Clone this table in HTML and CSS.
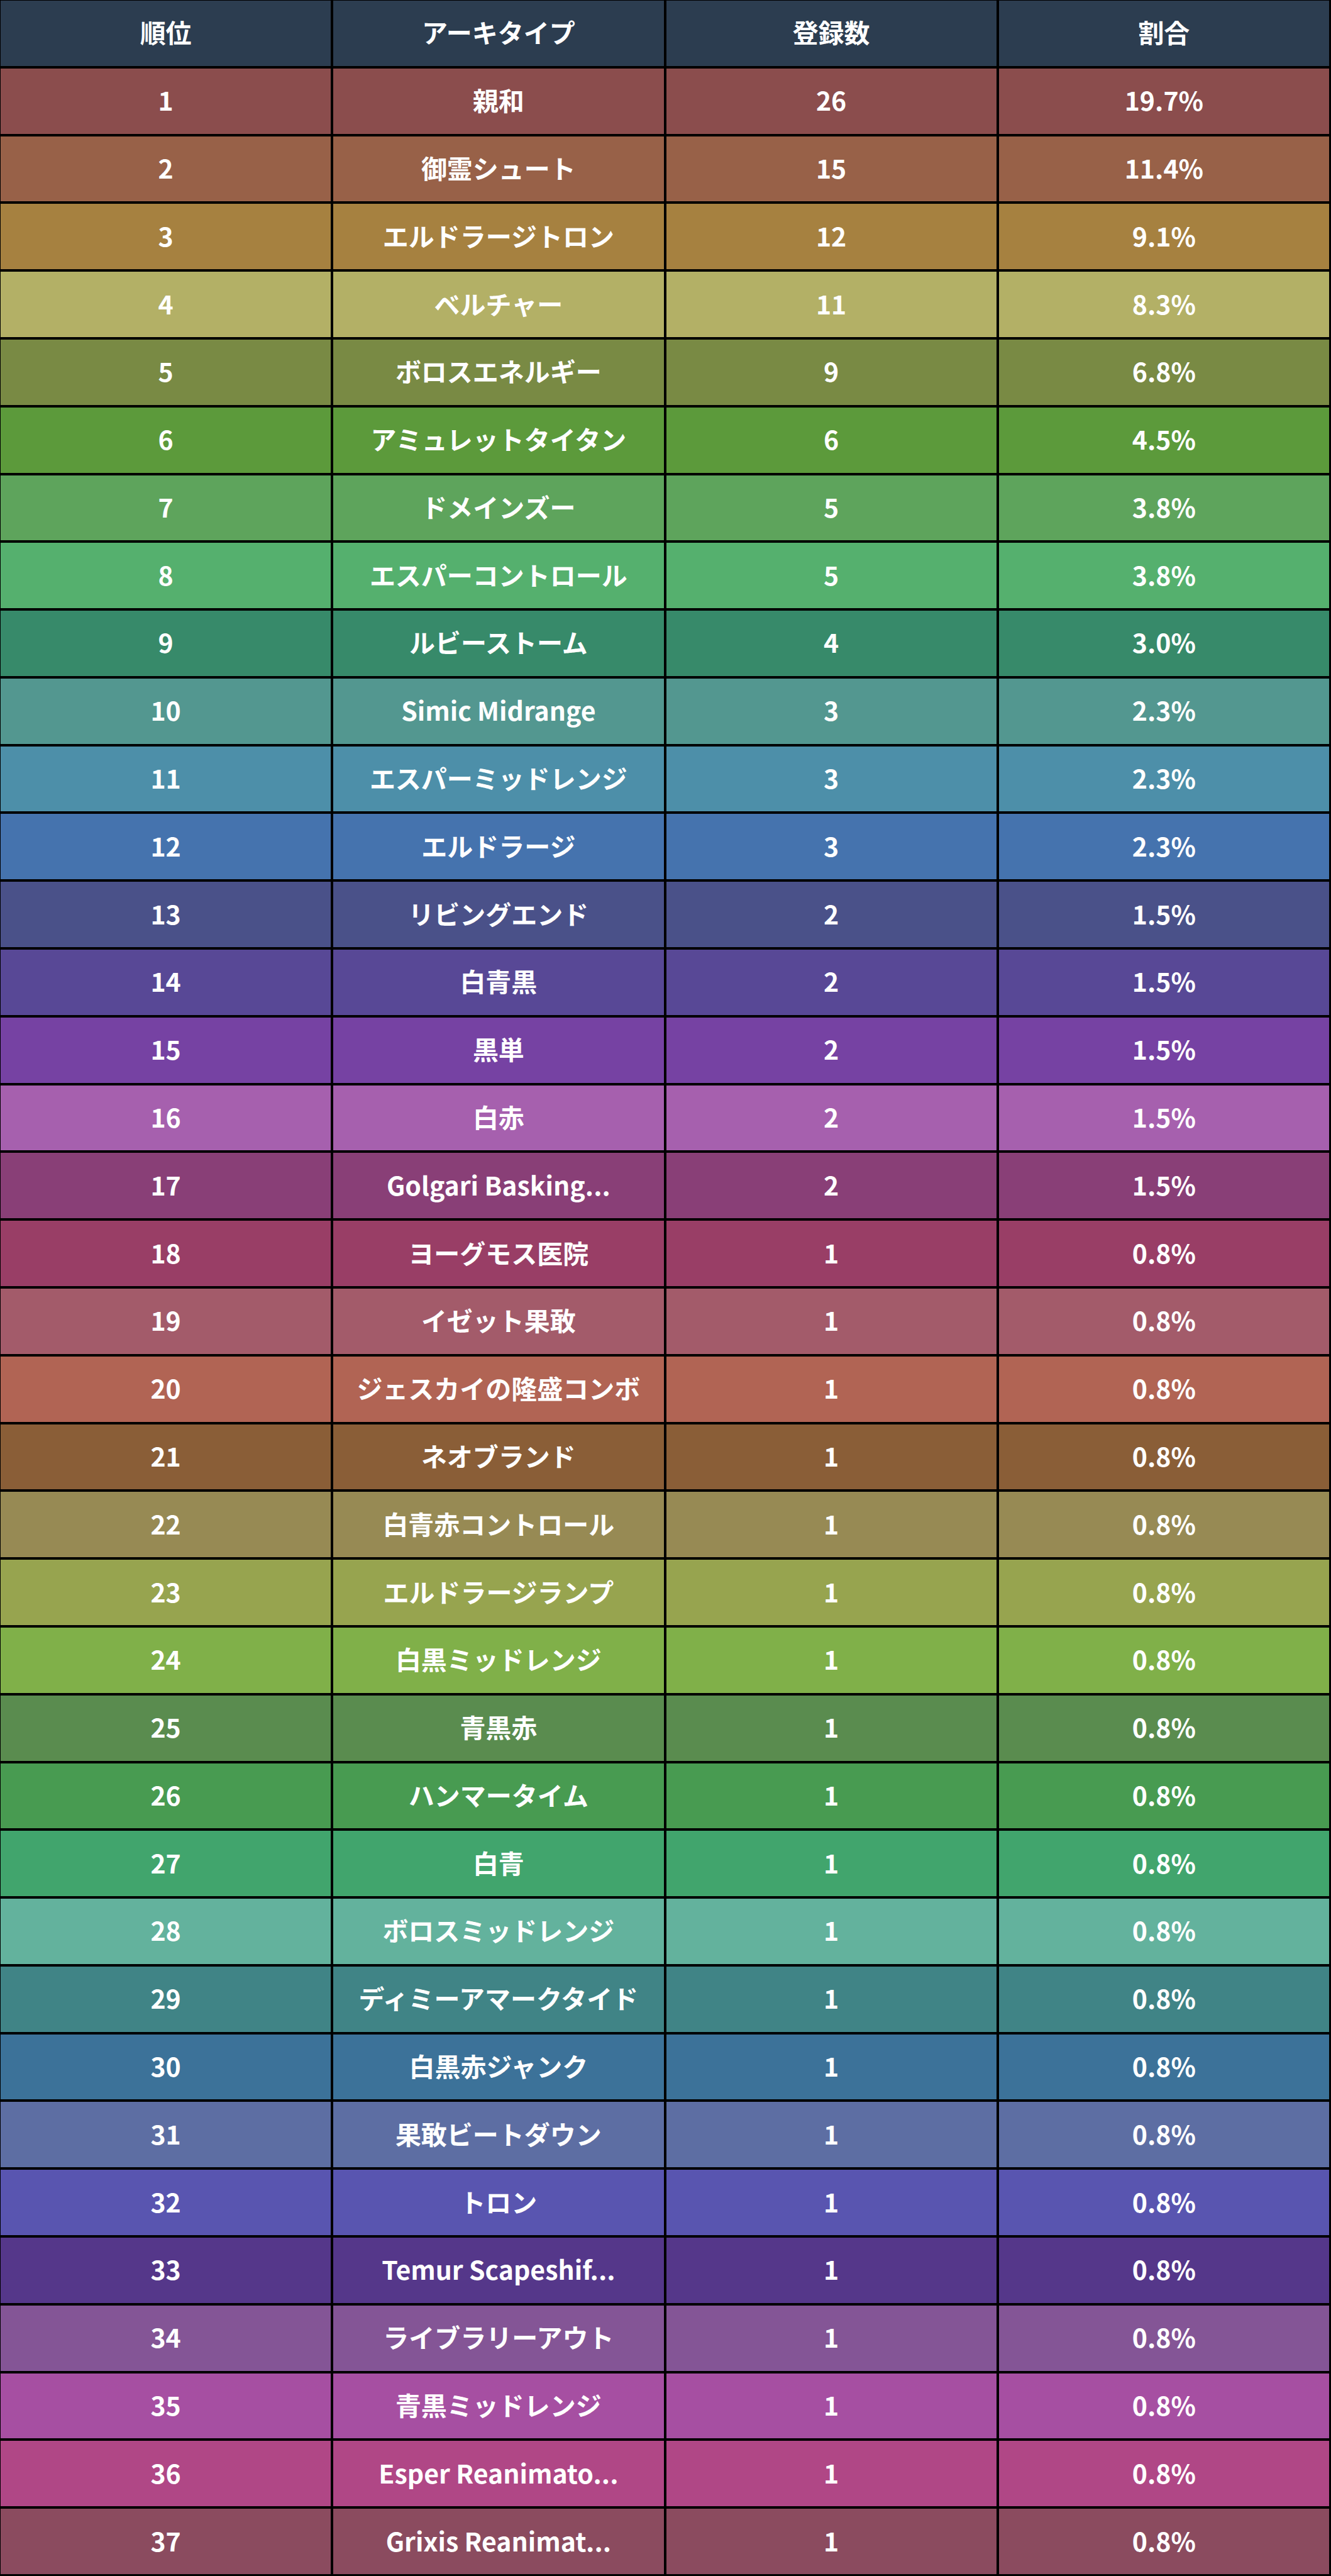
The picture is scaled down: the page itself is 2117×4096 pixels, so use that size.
FILE: index.html
```html
<!DOCTYPE html>
<html lang="ja">
<head>
<meta charset="utf-8">
<title>アーキタイプ分布</title>
<link rel="stylesheet" href="styles.css">
</head>
<body>
<div class="table">
  <div class="row head"><div class="cell">順位</div><div class="cell">アーキタイプ</div><div class="cell">登録数</div><div class="cell">割合</div></div>
  <div class="row r1"><div class="cell">1</div><div class="cell">親和</div><div class="cell">26</div><div class="cell">19.7%</div></div>
  <div class="row r2"><div class="cell">2</div><div class="cell">御霊シュート</div><div class="cell">15</div><div class="cell">11.4%</div></div>
  <div class="row r3"><div class="cell">3</div><div class="cell">エルドラージトロン</div><div class="cell">12</div><div class="cell">9.1%</div></div>
  <div class="row r4"><div class="cell">4</div><div class="cell">ベルチャー</div><div class="cell">11</div><div class="cell">8.3%</div></div>
  <div class="row r5"><div class="cell">5</div><div class="cell">ボロスエネルギー</div><div class="cell">9</div><div class="cell">6.8%</div></div>
  <div class="row r6"><div class="cell">6</div><div class="cell">アミュレットタイタン</div><div class="cell">6</div><div class="cell">4.5%</div></div>
  <div class="row r7"><div class="cell">7</div><div class="cell">ドメインズー</div><div class="cell">5</div><div class="cell">3.8%</div></div>
  <div class="row r8"><div class="cell">8</div><div class="cell">エスパーコントロール</div><div class="cell">5</div><div class="cell">3.8%</div></div>
  <div class="row r9"><div class="cell">9</div><div class="cell">ルビーストーム</div><div class="cell">4</div><div class="cell">3.0%</div></div>
  <div class="row r10"><div class="cell">10</div><div class="cell">Simic Midrange</div><div class="cell">3</div><div class="cell">2.3%</div></div>
  <div class="row r11"><div class="cell">11</div><div class="cell">エスパーミッドレンジ</div><div class="cell">3</div><div class="cell">2.3%</div></div>
  <div class="row r12"><div class="cell">12</div><div class="cell">エルドラージ</div><div class="cell">3</div><div class="cell">2.3%</div></div>
  <div class="row r13"><div class="cell">13</div><div class="cell">リビングエンド</div><div class="cell">2</div><div class="cell">1.5%</div></div>
  <div class="row r14"><div class="cell">14</div><div class="cell">白青黒</div><div class="cell">2</div><div class="cell">1.5%</div></div>
  <div class="row r15"><div class="cell">15</div><div class="cell">黒単</div><div class="cell">2</div><div class="cell">1.5%</div></div>
  <div class="row r16"><div class="cell">16</div><div class="cell">白赤</div><div class="cell">2</div><div class="cell">1.5%</div></div>
  <div class="row r17"><div class="cell">17</div><div class="cell">Golgari Basking...</div><div class="cell">2</div><div class="cell">1.5%</div></div>
  <div class="row r18"><div class="cell">18</div><div class="cell">ヨーグモス医院</div><div class="cell">1</div><div class="cell">0.8%</div></div>
  <div class="row r19"><div class="cell">19</div><div class="cell">イゼット果敢</div><div class="cell">1</div><div class="cell">0.8%</div></div>
  <div class="row r20"><div class="cell">20</div><div class="cell">ジェスカイの隆盛コンボ</div><div class="cell">1</div><div class="cell">0.8%</div></div>
  <div class="row r21"><div class="cell">21</div><div class="cell">ネオブランド</div><div class="cell">1</div><div class="cell">0.8%</div></div>
  <div class="row r22"><div class="cell">22</div><div class="cell">白青赤コントロール</div><div class="cell">1</div><div class="cell">0.8%</div></div>
  <div class="row r23"><div class="cell">23</div><div class="cell">エルドラージランプ</div><div class="cell">1</div><div class="cell">0.8%</div></div>
  <div class="row r24"><div class="cell">24</div><div class="cell">白黒ミッドレンジ</div><div class="cell">1</div><div class="cell">0.8%</div></div>
  <div class="row r25"><div class="cell">25</div><div class="cell">青黒赤</div><div class="cell">1</div><div class="cell">0.8%</div></div>
  <div class="row r26"><div class="cell">26</div><div class="cell">ハンマータイム</div><div class="cell">1</div><div class="cell">0.8%</div></div>
  <div class="row r27"><div class="cell">27</div><div class="cell">白青</div><div class="cell">1</div><div class="cell">0.8%</div></div>
  <div class="row r28"><div class="cell">28</div><div class="cell">ボロスミッドレンジ</div><div class="cell">1</div><div class="cell">0.8%</div></div>
  <div class="row r29"><div class="cell">29</div><div class="cell">ディミーアマークタイド</div><div class="cell">1</div><div class="cell">0.8%</div></div>
  <div class="row r30"><div class="cell">30</div><div class="cell">白黒赤ジャンク</div><div class="cell">1</div><div class="cell">0.8%</div></div>
  <div class="row r31"><div class="cell">31</div><div class="cell">果敢ビートダウン</div><div class="cell">1</div><div class="cell">0.8%</div></div>
  <div class="row r32"><div class="cell">32</div><div class="cell">トロン</div><div class="cell">1</div><div class="cell">0.8%</div></div>
  <div class="row r33"><div class="cell">33</div><div class="cell">Temur Scapeshif...</div><div class="cell">1</div><div class="cell">0.8%</div></div>
  <div class="row r34"><div class="cell">34</div><div class="cell">ライブラリーアウト</div><div class="cell">1</div><div class="cell">0.8%</div></div>
  <div class="row r35"><div class="cell">35</div><div class="cell">青黒ミッドレンジ</div><div class="cell">1</div><div class="cell">0.8%</div></div>
  <div class="row r36"><div class="cell">36</div><div class="cell">Esper Reanimato...</div><div class="cell">1</div><div class="cell">0.8%</div></div>
  <div class="row r37"><div class="cell">37</div><div class="cell">Grixis Reanimat...</div><div class="cell">1</div><div class="cell">0.8%</div></div>
</div>
</body>
</html>
```

FILE: styles.css
```css
html, body {
  margin: 0;
  padding: 0;
  background: #000;
}
.table {
  width: 2117px;
  height: 4096px;
  box-sizing: border-box;
  background: #000;
  padding: 1px 3px 3px 1px;
  display: grid;
  grid-template-rows: repeat(38, 1fr);
  row-gap: 4px;
  font-family: "Noto Sans CJK JP", "Noto Sans", sans-serif;
  font-weight: 700;
  font-size: 41px;
  color: #fff;
}
.row {
  display: grid;
  grid-template-columns: repeat(4, 1fr);
  column-gap: 4px;
  background: #000;
}
.cell {
  display: flex;
  align-items: center;
  justify-content: center;
  padding-bottom: 5px;
  white-space: nowrap;
  background: var(--bg);
}
.head { --bg: #2c3d50; }
.r1 { --bg: #8b4d4d; }
.r2 { --bg: #986148; }
.r3 { --bg: #a68140; }
.r4 { --bg: #b3b066; }
.r5 { --bg: #798a44; }
.r6 { --bg: #5c9a3b; }
.r7 { --bg: #5ea45c; }
.r8 { --bg: #55b06e; }
.r9 { --bg: #378a6a; }
.r10 { --bg: #539790; }
.r11 { --bg: #4d8fa9; }
.r12 { --bg: #4573ae; }
.r13 { --bg: #4a5189; }
.r14 { --bg: #584896; }
.r15 { --bg: #7642a3; }
.r16 { --bg: #a660ae; }
.r17 { --bg: #893f77; }
.r18 { --bg: #993e66; }
.r19 { --bg: #a35b6a; }
.r20 { --bg: #b16454; }
.r21 { --bg: #8a5e37; }
.r22 { --bg: #978a54; }
.r23 { --bg: #97a44f; }
.r24 { --bg: #80b049; }
.r25 { --bg: #5a8c4f; }
.r26 { --bg: #489b51; }
.r27 { --bg: #41a56d; }
.r28 { --bg: #63b29d; }
.r29 { --bg: #408486; }
.r30 { --bg: #3c7299; }
.r31 { --bg: #5d6ea3; }
.r32 { --bg: #5955b0; }
.r33 { --bg: #55378a; }
.r34 { --bg: #845596; }
.r35 { --bg: #a64fa2; }
.r36 { --bg: #b04786; }
.r37 { --bg: #8b4b5f; }
```
